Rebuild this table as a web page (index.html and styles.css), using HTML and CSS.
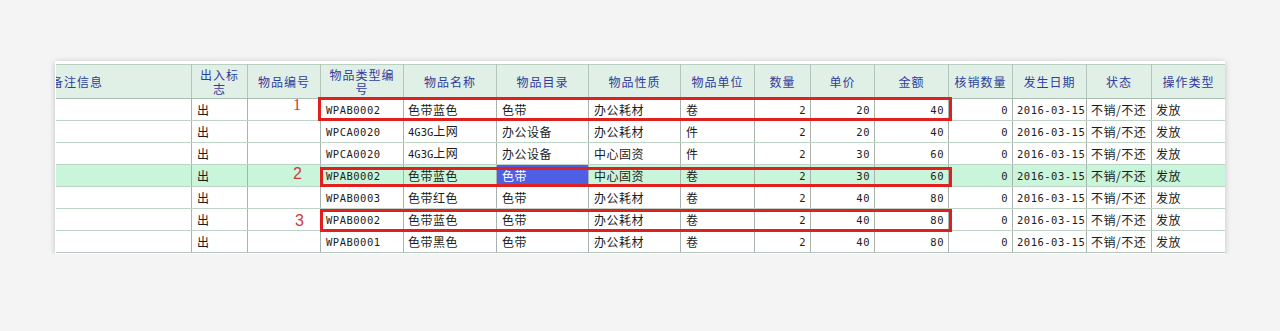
FILE: index.html
```html
<!DOCTYPE html>
<html lang="zh-CN">
<head>
<meta charset="utf-8">
<title>物品发放记录</title>
<link rel="stylesheet" href="styles.css">
</head>
<body>
<div class="panel">
  <div class="grid-wrap">
    <table class="grid">
      <colgroup>
        <col class="w-note"><col class="w-flag"><col class="w-no"><col class="w-type"><col class="w-name"><col class="w-cat"><col class="w-prop"><col class="w-unit"><col class="w-qty"><col class="w-price"><col class="w-amt"><col class="w-wo"><col class="w-date"><col class="w-state"><col class="w-op">
      </colgroup>
      <thead>
        <tr>
          <th class="h-note">备注信息</th>
          <th>出入标志</th>
          <th>物品编号</th>
          <th>物品类型编号</th>
          <th>物品名称</th>
          <th>物品目录</th>
          <th>物品性质</th>
          <th>物品单位</th>
          <th>数量</th>
          <th>单价</th>
          <th>金额</th>
          <th>核销数量</th>
          <th>发生日期</th>
          <th>状态</th>
          <th>操作类型</th>
        </tr>
      </thead>
      <tbody>
        <tr>
          <td></td><td>出</td><td></td><td class="lat">WPAB0002</td><td>色带蓝色</td><td>色带</td><td>办公耗材</td><td>卷</td><td class="num">2</td><td class="num">20</td><td class="num">40</td><td class="num">0</td><td class="lat">2016-03-15</td><td>不销/不还</td><td>发放</td>
        </tr>
        <tr>
          <td></td><td>出</td><td></td><td class="lat">WPCA0020</td><td><span class="lat">4G3G</span>上网</td><td>办公设备</td><td>办公耗材</td><td>件</td><td class="num">2</td><td class="num">20</td><td class="num">40</td><td class="num">0</td><td class="lat">2016-03-15</td><td>不销/不还</td><td>发放</td>
        </tr>
        <tr>
          <td></td><td>出</td><td></td><td class="lat">WPCA0020</td><td><span class="lat">4G3G</span>上网</td><td>办公设备</td><td>中心固资</td><td>件</td><td class="num">2</td><td class="num">30</td><td class="num">60</td><td class="num">0</td><td class="lat">2016-03-15</td><td>不销/不还</td><td>发放</td>
        </tr>
        <tr class="row-sel">
          <td></td><td>出</td><td></td><td class="lat">WPAB0002</td><td>色带蓝色</td><td class="cell-active">色带</td><td>中心固资</td><td>卷</td><td class="num">2</td><td class="num">30</td><td class="num">60</td><td class="num">0</td><td class="lat">2016-03-15</td><td>不销/不还</td><td>发放</td>
        </tr>
        <tr>
          <td></td><td>出</td><td></td><td class="lat">WPAB0003</td><td>色带红色</td><td>色带</td><td>办公耗材</td><td>卷</td><td class="num">2</td><td class="num">40</td><td class="num">80</td><td class="num">0</td><td class="lat">2016-03-15</td><td>不销/不还</td><td>发放</td>
        </tr>
        <tr>
          <td></td><td>出</td><td></td><td class="lat">WPAB0002</td><td>色带蓝色</td><td>色带</td><td>办公耗材</td><td>卷</td><td class="num">2</td><td class="num">40</td><td class="num">80</td><td class="num">0</td><td class="lat">2016-03-15</td><td>不销/不还</td><td>发放</td>
        </tr>
        <tr>
          <td></td><td>出</td><td></td><td class="lat">WPAB0001</td><td>色带黑色</td><td>色带</td><td>办公耗材</td><td>卷</td><td class="num">2</td><td class="num">40</td><td class="num">80</td><td class="num">0</td><td class="lat">2016-03-15</td><td>不销/不还</td><td>发放</td>
        </tr>
      </tbody>
    </table>
    <div class="mark mark-1"></div>
    <div class="mark mark-2"></div>
    <div class="mark mark-3"></div>
    <span class="tag tag-1">1</span>
    <span class="tag tag-2">2</span>
    <span class="tag tag-3">3</span>
  </div>
</div>
</body>
</html>
```
FILE: styles.css
```css
html, body {
  margin: 0;
  padding: 0;
}
body {
  background: #f4f4f4;
  font-family: "Noto Sans CJK SC", "Liberation Sans", sans-serif;
  font-size: 12px;
  color: #1c1c1c;
}
.panel {
  margin: 61px 0 0 55px;
  width: 1170px;
  padding: 3px 0 1px 1px;
  box-sizing: border-box;
  background: #fff;
  box-shadow: 0 1px 6px rgba(0, 0, 0, 0.22);
}
.grid-wrap {
  position: relative;
  overflow: hidden;
}
.grid {
  border-collapse: collapse;
  table-layout: fixed;
  width: 1177px;
  margin-left: -8px;
}
.w-note { width: 143px; }
.w-flag { width: 56px; }
.w-no { width: 73px; }
.w-type { width: 83px; }
.w-name { width: 93px; }
.w-cat { width: 92px; }
.w-prop { width: 92px; }
.w-unit { width: 74px; }
.w-qty { width: 56px; }
.w-price { width: 64px; }
.w-amt { width: 74px; }
.w-wo { width: 64px; }
.w-date { width: 74px; }
.w-state { width: 65px; }
.w-op { width: 74px; }

.grid th {
  height: 33px;
  padding: 0 4px;
  background: #e0f0e6;
  color: #2f3ca0;
  font-weight: normal;
  letter-spacing: 1px;
  line-height: 14px;
  text-align: center;
  border-top: 1px solid #b9cfc2;
  border-bottom: 1px solid #a9bfb2;
  border-left: 1px solid #b4c6bb;
  border-right: 1px solid #b4c6bb;
}
.grid th.h-note {
  text-align: left;
  padding-left: 2px;
}
.grid td {
  height: 21px;
  padding: 0 4px;
  line-height: 14px;
  letter-spacing: 0.5px;
  white-space: nowrap;
  overflow: hidden;
  border-top: 1px solid #bcd3c5;
  border-bottom: 1px solid #bcd3c5;
  border-left: 1px solid #a9b2ad;
  border-right: 1px solid #a9b2ad;
}
.grid td:nth-child(2),
.grid td:nth-child(4),
.grid td:nth-child(6),
.grid td:nth-child(7),
.grid td:nth-child(8) {
  padding-left: 5px;
}
.grid td.num {
  text-align: right;
  padding-right: 4px;
}
.lat, .num {
  font-family: "DejaVu Sans Mono", "Liberation Mono", monospace;
  font-size: 10.5px;
  letter-spacing: 0;
}
.grid td.lat, .grid td.num {
  font-size: 10.5px;
}
.grid td .lat {
  letter-spacing: 0;
}
.row-sel td {
  background: #c9f5da;
}
.row-sel td.cell-active {
  background: #4e5fe4;
  color: #fff;
}
.grid tbody tr:last-child td {
  border-bottom: 1px solid #b4c6bb;
}

.mark {
  position: absolute;
  border: 3px solid #e01f1f;
  box-sizing: border-box;
}
.mark-1 { left: 262px; top: 33px; width: 634px; height: 24px; }
.mark-2 { left: 264px; top: 103px; width: 632px; height: 20px; }
.mark-3 { left: 264px; top: 145px; width: 632px; height: 23px; }

.tag {
  position: absolute;
  color: #cf3a3a;
  font-size: 16px;
  line-height: 16px;
}
.tag-1 { left: 237px; top: 33px; font-family: "Liberation Serif", serif; }
.tag-2 { left: 237px; top: 102px; font-family: "Liberation Sans", sans-serif; }
.tag-3 { left: 239px; top: 149px; font-family: "Liberation Sans", sans-serif; }
```
